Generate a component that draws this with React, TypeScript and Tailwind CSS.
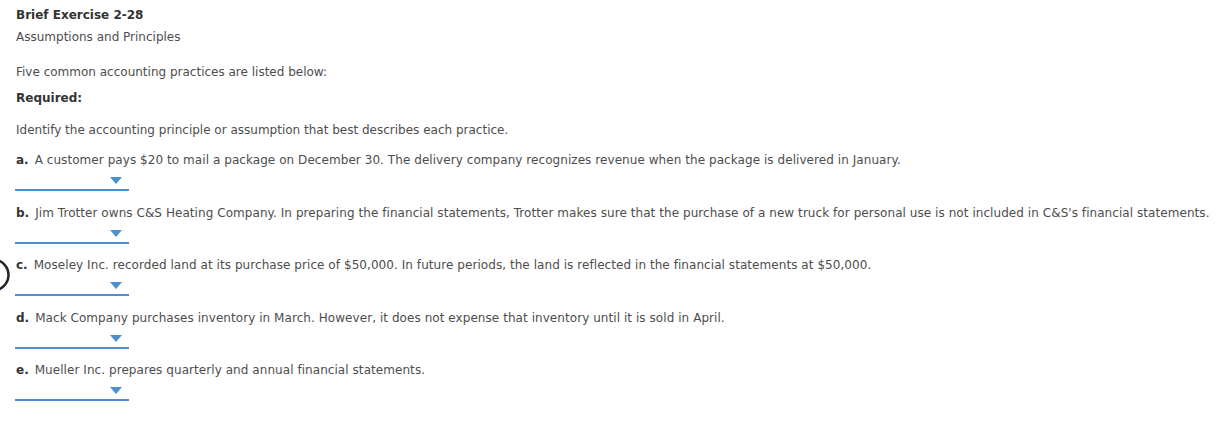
import React from "react";

const items = [
  { l: "a.", t: "A customer pays $20 to mail a package on December 30. The delivery company recognizes revenue when the package is delivered in January." },
  { l: "b.", t: "Jim Trotter owns C&S Heating Company. In preparing the financial statements, Trotter makes sure that the purchase of a new truck for personal use is not included in C&S's financial statements." },
  { l: "c.", t: "Moseley Inc. recorded land at its purchase price of $50,000. In future periods, the land is reflected in the financial statements at $50,000." },
  { l: "d.", t: "Mack Company purchases inventory in March. However, it does not expense that inventory until it is sold in April." },
  { l: "e.", t: "Mueller Inc. prepares quarterly and annual financial statements." },
];

function Drop() {
  return (
    <div className="relative w-[114px] h-[22px] border-b-2 border-[#4a90d0] ml-[15px]">
      <svg className="absolute right-[7px] top-[8px]" width="12" height="7" viewBox="0 0 12 7">
        <polygon points="0,0 12,0 6,7" fill="#4a90d0" />
      </svg>
    </div>
  );
}

export default function App() {
  return (
    <div className="relative w-[1225px] h-[432px] bg-white text-[12px] text-[#4d4d4d] overflow-hidden" style={{ fontFamily: "'DejaVu Sans', Verdana, sans-serif" }}>
      <div className="pl-4 pt-[6px]">
        <div className="font-bold text-[#333] leading-[18px]">Brief Exercise 2-28</div>
        <div className="mt-[4px] leading-[18px]">Assumptions and Principles</div>
        <div className="mt-[17px] leading-[18px]">Five common accounting practices are listed below:</div>
        <div className="mt-[8px] font-bold text-[#333] leading-[18px]">Required:</div>
        <div className="mt-[14px] leading-[18px]">Identify the accounting principle or assumption that best describes each practice.</div>
      </div>
      <div className="mt-[12px]">
        {items.map((it) => (
          <div key={it.l} className="h-[52.5px]">
            <div className="pl-4 leading-[18px] whitespace-nowrap">
              <span className="font-bold text-[#333]">{it.l}</span>
              <span className="ml-[6px] tracking-[0.06px]">{it.t}</span>
            </div>
            <Drop />
          </div>
        ))}
      </div>
      <svg className="absolute left-[-24px] top-[258px]" width="34" height="34" viewBox="0 0 34 34">
        <circle cx="17" cy="17" r="15.5" fill="none" stroke="#222" strokeWidth="2.5" />
      </svg>
    </div>
  );
}
